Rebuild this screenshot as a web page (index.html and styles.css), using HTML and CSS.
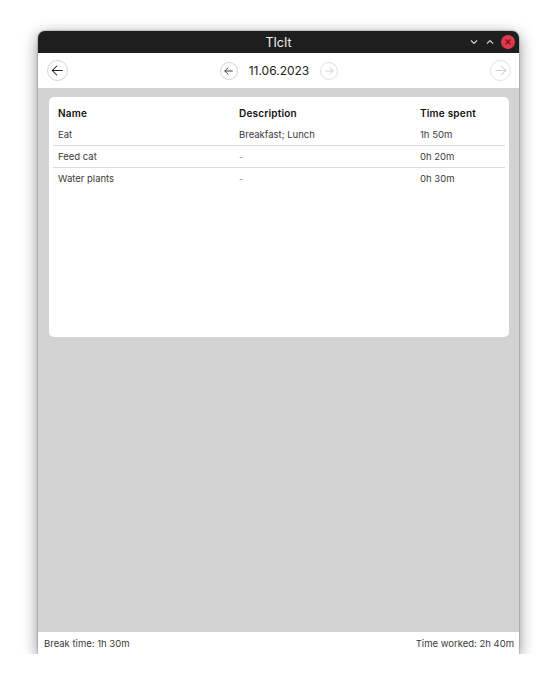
FILE: index.html
```html
<!DOCTYPE html>
<html>
<head>
<meta charset="utf-8">
<link rel="stylesheet" href="styles.css">
</head>
<body>
<div class="window">
  <div class="titlebar">
    <span class="title">TIcIt</span>
    <div class="wm">
      <svg class="wm-ico" width="10" height="10" viewBox="0 0 10 10"><path d="M2 3.5 L5 6.5 L8 3.5" fill="none" stroke="#cfcfcf" stroke-width="1.2"/></svg>
      <svg class="wm-ico" width="10" height="10" viewBox="0 0 10 10"><path d="M2 6.5 L5 3.5 L8 6.5" fill="none" stroke="#cfcfcf" stroke-width="1.2"/></svg>
      <span class="close"><svg width="12" height="12" viewBox="0 0 12 12"><path d="M3.5 3.5 L8.5 8.5 M8.5 3.5 L3.5 8.5" stroke="#7a1522" stroke-width="1.3"/></svg></span>
    </div>
  </div>
  <div class="toolbar">
    <span class="circ big">
      <svg width="20" height="20" viewBox="0 0 20 20"><path d="M15.5 10 H4.5 M9.5 5 L4.5 10 L9.5 15" fill="none" stroke="#222" stroke-width="1.1"/></svg>
    </span>
    <div class="datenav">
      <span class="circ small">
        <svg width="17" height="17" viewBox="0 0 17 17"><path d="M12.5 8.5 H4 M7.8 4.8 L4 8.5 L7.8 12.2" fill="none" stroke="#333" stroke-width="1"/></svg>
      </span>
      <span class="date">11.06.2023</span>
      <span class="circ small dis">
        <svg width="17" height="17" viewBox="0 0 17 17"><path d="M4.5 8.5 H13 M9.2 4.8 L13 8.5 L9.2 12.2" fill="none" stroke="#cfcfcf" stroke-width="1"/></svg>
      </span>
    </div>
    <span class="circ big dis">
      <svg width="20" height="20" viewBox="0 0 20 20"><path d="M4.5 10 H15.5 M10.5 5 L15.5 10 L10.5 15" fill="none" stroke="#cfcfcf" stroke-width="1.1"/></svg>
    </span>
  </div>
  <div class="content">
    <div class="card">
      <div class="row head">
        <span>Name</span><span>Description</span><span>Time spent</span>
      </div>
      <div class="row">
        <span>Eat</span><span>Breakfast; Lunch</span><span>1h 50m</span>
      </div>
      <div class="row sep">
        <span>Feed cat</span><span class="dash">-</span><span>0h 20m</span>
      </div>
      <div class="row sep">
        <span>Water plants</span><span class="dash">-</span><span>0h 30m</span>
      </div>
    </div>
  </div>
  <div class="footer">
    <span>Break time: 1h 30m</span>
    <span>Time worked: 2h 40m</span>
  </div>
</div>
</body>
</html>
```
FILE: styles.css
```css
html, body {
  margin: 0;
  padding: 0;
  background: #ffffff;
}
body {
  padding: 31px 0 0 38px;
  font-family: Inter, "Noto Sans", sans-serif;
}
.window {
  width: 481px;
  height: 623px;
  display: flex;
  flex-direction: column;
  border-radius: 7px 7px 0 0;
  overflow: hidden;
  box-shadow: 0 4px 16px rgba(0,0,0,0.45), 0 0 2px rgba(0,0,0,0.5);
  background: #d3d3d3;
}
.titlebar {
  height: 22px;
  background: #1e1e1e;
  display: flex;
  align-items: center;
  justify-content: center;
  position: relative;
  flex: none;
}
.title {
  color: #f0f0f0;
  font-family: Inter, sans-serif;
  font-size: 12.5px;
  font-weight: 400;
}
.wm {
  position: absolute;
  right: 4px;
  top: 4px;
  display: flex;
  align-items: center;
  gap: 6px;
}
.wm-ico { display: block; }
.close {
  width: 14px;
  height: 14px;
  border-radius: 50%;
  background: #e0384a;
  display: flex;
  align-items: center;
  justify-content: center;
}
.close svg { width: 12px; height: 12px; }
.toolbar {
  height: 35px;
  background: #ffffff;
  display: flex;
  align-items: center;
  justify-content: space-between;
  padding: 0 8px 0 9px;
  flex: none;
}
.circ {
  display: flex;
  border-radius: 50%;
  box-sizing: border-box;
  border: 1px solid #d4d4d4;
  align-items: center;
  justify-content: center;
}
.circ.big { width: 21px; height: 21px; }
.circ.small { width: 18px; height: 18px; }
.circ svg { display: block; }
.circ.big svg { width: 19px; height: 19px; }
.circ.small svg { width: 16px; height: 16px; }
.circ.dis { border-color: #e0e0e0; }
.datenav {
  display: flex;
  align-items: center;
  gap: 11px;
  margin-left: 0;
}
.date {
  font-size: 12px;
  color: #222;
}
.content {
  flex: 1;
  padding: 9px 10px 9px 11px;
}
.card {
  background: #ffffff;
  border-radius: 5px;
  height: 240px;
  padding: 5px 4px;
  box-sizing: border-box;
}
.row {
  display: grid;
  grid-template-columns: 181px 181px 1fr;
  height: 21px;
  align-items: center;
  font-size: 9.5px;
  color: #3a3a3a;
}
.row span { padding-left: 5px; }
.row.sep { border-top: 1px solid #dcdcdc; }
.row.head {
  font-weight: 600;
  font-size: 10px;
  letter-spacing: 0.2px;
  color: #111;
  height: 22px;
}
.dash { color: #999; }
.footer {
  height: 22px;
  background: #ffffff;
  display: flex;
  align-items: center;
  justify-content: space-between;
  padding: 0 5px 0 6px;
  font-size: 9.5px;
  color: #3a3a3a;
  flex: none;
}
```
